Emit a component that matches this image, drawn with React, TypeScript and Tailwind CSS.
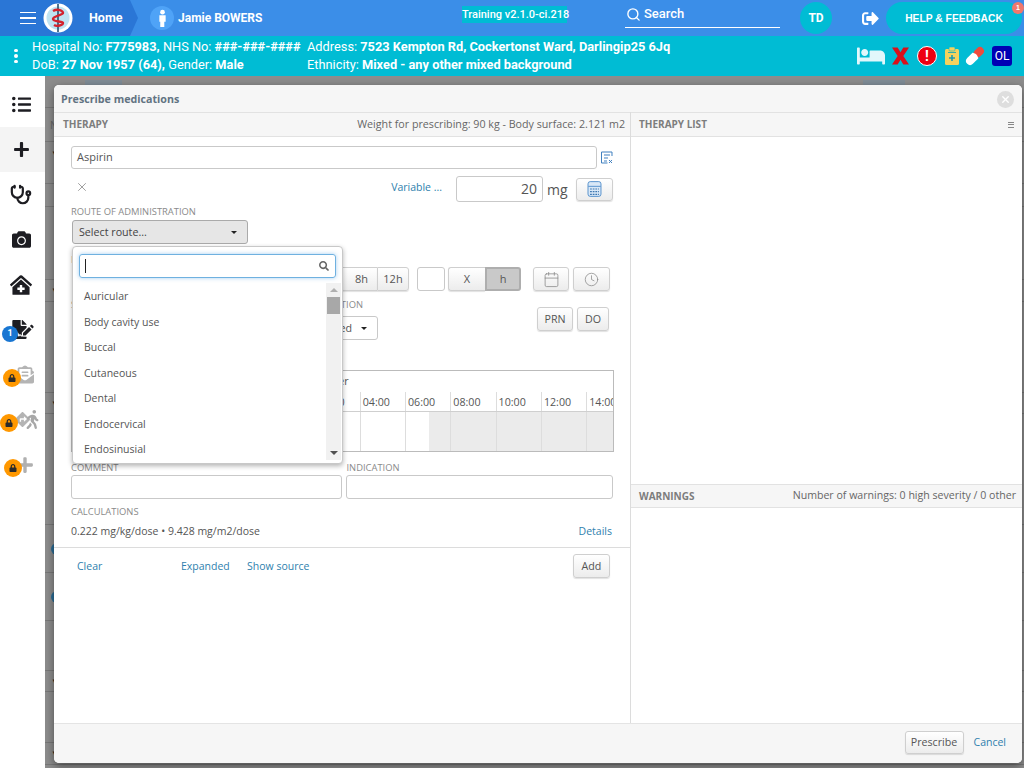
import { Search, X, Calendar, Clock } from "lucide-react";
import {
  FaListUl,
  FaPlus,
  FaCamera,
  FaClinicMedical,
  FaFileSignature,
  FaLock,
  FaWalking,
  FaDirections,
  FaBed,
  FaSignOutAlt,
  FaSearch,
  FaEnvelopeOpenText,
} from "react-icons/fa";
import { LuStethoscope } from "react-icons/lu";

const routes = ["Auricular", "Body cavity use", "Buccal", "Cutaneous", "Dental", "Endocervical", "Endosinusial"];
const hours = ["04:00", "06:00", "08:00", "10:00", "12:00", "14:00"];

const btn =
  "flex items-center justify-center border border-[#cfcfcf] bg-gradient-to-b from-white to-[#ececec] rounded-[3px] text-[#555] shadow-[0_1px_1px_rgba(0,0,0,0.12)]";
const label = "text-[9.4px] leading-[13px] text-[#8a8a8a]";
const link = "text-[#2f7fae] text-[10.5px]";

function Lock({ className }: { className: string }) {
  return (
    <span className={`absolute w-[18px] h-[18px] rounded-full bg-[#ff9800] flex items-center justify-center ${className}`}>
      <FaLock className="w-[8px] h-[8px] text-[#2b2b2b]" />
    </span>
  );
}

function Sidebar() {
  return (
    <div className="w-[45px] bg-white pt-[6px] flex flex-col shrink-0">
      <div className="h-[45px] flex items-center justify-center pr-[3px]">
        <FaListUl className="w-[19px] h-[19px] text-[#1d1d22]" />
      </div>
      <div className="h-[45px] flex items-center justify-center pr-[3px] bg-[#f4f4f4]">
        <FaPlus className="w-[17px] h-[17px] text-[#1d1d22]" />
      </div>
      <div className="h-[45px] flex items-center justify-center pr-[3px]">
        <LuStethoscope className="w-[22px] h-[22px] text-[#1d1d22] stroke-[2.4]" />
      </div>
      <div className="h-[45px] flex items-center justify-center pr-[3px]">
        <FaCamera className="w-[19px] h-[19px] text-[#1d1d22]" />
      </div>
      <div className="h-[45px] flex items-center justify-center pr-[3px]">
        <FaClinicMedical className="w-[22px] h-[20px] text-[#1d1d22]" />
      </div>
      <div className="h-[45px] flex items-center justify-center relative">
        <FaFileSignature className="w-[22px] h-[19px] text-[#1d1d22]" />
        <span className="absolute left-[2px] top-[19px] w-[16px] h-[16px] rounded-full bg-[#1976d2] text-white text-[9px] font-bold flex items-center justify-center font-['Roboto',sans-serif]">
          1
        </span>
      </div>
      <div className="h-[45px] flex items-center justify-center relative pl-[4px]">
        <FaEnvelopeOpenText className="w-[18px] h-[19px] text-[#b4b4b4]" />
        <Lock className="left-[3px] top-[17px]" />
      </div>
      <div className="h-[45px] flex items-center justify-center relative pl-[8px]">
        <FaDirections className="w-[15px] h-[15px] text-[#b4b4b4]" />
        <FaWalking className="ml-[-4px] w-[13px] h-[19px] text-[#a8a8a8]" />
        <Lock className="left-0 top-[17px]" />
      </div>
      <div className="h-[45px] flex items-center justify-center relative pl-[4px]">
        <FaPlus className="w-[18px] h-[18px] text-[#b0b0b0]" />
        <Lock className="left-[4px] top-[17px]" />
      </div>
    </div>
  );
}

function Logo() {
  return (
    <svg viewBox="0 0 30 30" className="w-[30px] h-[30px] shrink-0">
      <circle cx="15" cy="15" r="14.5" fill="#fff" />
      <circle cx="15" cy="15" r="11.5" fill="#bfe3f2" />
      <path d="M15 1v28" stroke="#26506e" strokeWidth="1.6" />
      <path d="M10 8c5-3 10 0 10 2s-10 3-10 6 10 2 10 4-6 4-9 2" fill="none" stroke="#d3232e" strokeWidth="2.4" />
    </svg>
  );
}

function Capsule() {
  return (
    <svg viewBox="0 0 20 20" className="w-[20px] h-[20px]">
      <g transform="rotate(45 10 10)">
        <rect x="6" y="-1" width="8" height="11" rx="4" fill="#ef4b3c" />
        <rect x="6" y="8" width="8" height="13" rx="4" fill="#fff" />
        <rect x="6" y="9" width="8" height="3" fill="#fff" />
      </g>
    </svg>
  );
}

function ClipboardPlus() {
  return (
    <svg viewBox="0 0 14 18" className="w-[14px] h-[18px]">
      <rect x="0" y="2" width="14" height="16" rx="1.5" fill="#f5d25e" />
      <rect x="4" y="0" width="6" height="4" rx="1" fill="#f5d25e" stroke="#00bcd4" strokeWidth="0.6" />
      <path d="M3 5.5h8" stroke="#00a5bb" strokeWidth="0.8" />
      <path d="M7 8v6M4 11h6" stroke="#1f9ab0" strokeWidth="1.6" />
    </svg>
  );
}

function Header() {
  return (
    <div className="h-[36px] bg-[#3b8ee8] flex items-center relative text-white font-['Roboto',sans-serif] shrink-0">
      <div className="w-[138px] h-full bg-[#2a76d6] [clip-path:polygon(0_0,130px_0,138px_18px,130px_100%,0_100%)] flex items-center pl-[20px] shrink-0">
        <div className="flex flex-col gap-[4px] w-[16px]">
          <span className="h-[1.5px] bg-white" />
          <span className="h-[1.5px] bg-white" />
          <span className="h-[1.5px] bg-white" />
        </div>
        <div className="ml-[7px]">
          <Logo />
        </div>
        <span className="ml-[16px] text-[12.5px] font-bold">Home</span>
      </div>
      <div className="ml-[12px] w-[24px] h-[24px] rounded-full bg-[#4fa3f7] flex items-center justify-center shrink-0">
        <svg viewBox="0 0 10 20" className="w-[9px] h-[19px]" fill="#fff">
          <circle cx="5" cy="3" r="2.6" />
          <path d="M1.5 6.5h7v7h-1.5v6h-4.5v-6h-1z" />
        </svg>
      </div>
      <span className="ml-[4px] w-[84px] text-[12px] font-bold whitespace-nowrap shrink-0">Jamie BOWERS</span>
      <div className="ml-[200px] mb-[8px] w-[105px] h-[17px] bg-[#00bcd4] text-[11px] leading-[17px] font-medium text-center whitespace-nowrap shrink-0">
        Training v2.1.0-ci.218
      </div>
      <div className="ml-[58px] mb-[6px] w-[155px] h-[25px] border-b border-white flex items-center pb-[1px] shrink-0">
        <Search className="w-[15px] h-[15px] ml-[1px]" strokeWidth={2.2} />
        <span className="ml-[3px] text-[13px] font-medium">Search</span>
      </div>
      <div className="ml-[20px] w-[32px] h-[32px] rounded-full bg-[#00bcd4] flex items-center justify-center text-[12px] font-bold shrink-0">TD</div>
      <FaSignOutAlt className="ml-[29px] w-[19px] h-[17px] shrink-0" />
      <div className="ml-[6px] w-[136px] h-[32px] pt-px rounded-full bg-[#00bcd4] flex items-center justify-center font-['Liberation_Sans',sans-serif] text-[10.3px] font-bold relative shrink-0">
        HELP &amp; FEEDBACK
        <span className="absolute right-[-2px] top-0 w-[12px] h-[12px] rounded-full bg-[#f0776c] text-[7px] flex items-center justify-center">1</span>
      </div>
    </div>
  );
}

function PatientBar() {
  return (
    <div className="h-[40px] bg-[#00bcd4] flex items-center text-white text-[12.8px] leading-[18px] font-['Roboto',sans-serif] shrink-0">
      <div className="w-[32px] flex flex-col items-center gap-[2px]">
        <span className="w-[3.5px] h-[3.5px] rounded-full bg-white" />
        <span className="w-[3.5px] h-[3.5px] rounded-full bg-white" />
        <span className="w-[3.5px] h-[3.5px] rounded-full bg-white" />
      </div>
      <div className="w-[275px] whitespace-nowrap">
        <div>
          Hospital No: <b className="font-bold">F775983,</b> NHS No: <b className="font-bold">###-###-####</b>
        </div>
        <div>
          DoB: <b className="font-bold">27 Nov 1957 (64),</b> Gender: <b className="font-bold">Male</b>
        </div>
      </div>
      <div className="whitespace-nowrap">
        <div>
          Address: <b className="font-bold">7523 Kempton Rd, Cockertonst Ward, Darlingip25 6Jq</b>
        </div>
        <div>
          Ethnicity: <b className="font-bold">Mixed - any other mixed background</b>
        </div>
      </div>
      <div className="ml-auto mr-[12px] flex items-center">
        <FaBed className="w-[28px] h-[24px] text-[#e2f7fb]" />
        <svg viewBox="0 0 18 18" className="ml-[7px] w-[17px] h-[18px]" fill="#d8101a">
          <path d="M0 0h6l3 5 3-5h6l-6 9 6 9h-6l-3-5-3 5H0l6-9z" />
        </svg>
        <span className="ml-[8px] w-[20px] h-[20px] rounded-full bg-[#ee0011] border border-white flex items-center justify-center text-[14px] font-bold">!</span>
        <span className="ml-[8px] flex">
          <ClipboardPlus />
        </span>
        <span className="ml-[6px] flex">
          <Capsule />
        </span>
        <span className="ml-[7px] w-[20px] h-[20px] rounded-[3px] bg-[#0000b4] text-[12px] flex items-center justify-center">OL</span>
      </div>
    </div>
  );
}

function Backdrop() {
  return (
    <div className="flex-1 bg-[#8c8c8c] flex flex-col relative overflow-hidden">
      <div className="h-[32px] border-b border-[#777] flex items-start pt-[4px] shrink-0">
        <span className="ml-[40px] w-[37px] h-[9px] bg-[#7f8c96]" />
        <span className="ml-auto mr-[119px] w-[42px] h-[9px] bg-[#7f8c96]" />
      </div>
      <div className="h-[34px] border-b border-[#777] pl-[5px] text-[10px] leading-[34px] text-[#666] shrink-0">N</div>
      <div className="h-[42px] border-b border-[#777] pl-[6px] text-[8px] leading-[22px] text-[#222] shrink-0">▼</div>
      <div className="h-[23px] border-b border-[#777] shrink-0" />
      <div className="h-[73px] border-b border-[#777] shrink-0" />
      <div className="h-[22px] border-b border-[#777] pl-[6px] text-[8px] leading-[20px] text-[#222] shrink-0">▼</div>
      <div className="h-[91px] border-b border-[#777] shrink-0" />
      <div className="h-[21px] border-b border-[#777] pl-[6px] text-[8px] leading-[20px] text-[#222] shrink-0">▼</div>
      <div className="h-[111px] border-b border-[#777] shrink-0" />
      <div className="h-[48px] border-b border-[#777] flex items-center shrink-0">
        <span className="ml-[6px] w-[8px] h-[12px] rounded-l-full bg-[#2b6c96]" />
      </div>
      <div className="h-[48px] border-b border-[#777] flex items-center shrink-0">
        <span className="ml-[6px] w-[8px] h-[12px] rounded-l-full bg-[#2b6c96]" />
      </div>
      <div className="h-[50px] border-b border-[#777] shrink-0" />
      <div className="h-[21px] border-b border-[#777] pl-[6px] text-[8px] leading-[20px] text-[#222] shrink-0">▼</div>
      <div className="h-[51px] border-b border-[#777] shrink-0" />
      <div className="h-[22px] border-b border-[#777] pl-[6px] text-[8px] leading-[20px] text-[#222] shrink-0">▼</div>
    </div>
  );
}

function RouteDropdown() {
  return (
    <div className="absolute left-[18px] top-[134px] w-[271px] h-[218px] bg-white border border-[#c8c8c8] rounded-[4px] shadow-[0_2px_5px_rgba(0,0,0,0.3)] z-10 flex flex-col">
      <div className="mx-[6px] mt-[7px] h-[24px] border border-[#6fb1e0] rounded-[3px] shadow-[0_0_4px_rgba(80,160,230,0.5)] flex items-center shrink-0">
        <span className="ml-[5px] w-px h-[14px] bg-[#222]" />
        <FaSearch className="ml-auto mr-[6px] w-[10px] h-[10px] text-[#666]" />
      </div>
      <div className="flex flex-1 mt-[5px] mb-[3px] min-h-0">
        <div className="flex-1 flex flex-col pt-px text-[10.5px] text-[#555]">
          {routes.map((r) => (
            <div key={r} className="h-[25.5px] leading-[25px] pl-[11px] shrink-0">
              {r}
            </div>
          ))}
        </div>
        <div className="w-[15px] mr-px bg-[#f1f1f1] flex flex-col items-center pt-[5px] pb-[5px]">
          <span className="w-0 h-0 border-x-[4px] border-x-transparent border-b-[4px] border-b-[#b0b0b0]" />
          <span className="mt-[5px] w-[13px] h-[17px] bg-[#a8a8a8]" />
          <span className="mt-auto w-0 h-0 border-x-[4px] border-x-transparent border-t-[4px] border-t-[#505050]" />
        </div>
      </div>
    </div>
  );
}

function TherapyForm() {
  return (
    <div className="w-[577px] border-r border-[#dcdcdc] flex flex-col relative shrink-0 text-[#555]">
      <div className="h-[25px] bg-[#f6f6f6] border-y border-[#e2e2e2] flex items-center justify-between pl-[9px] pr-[5px] shrink-0">
        <span className="text-[10px] font-bold text-[#7d7d7d]">THERAPY</span>
        <span className="text-[10.7px] text-[#666]">Weight for prescribing: 90 kg - Body surface: 2.121 m2</span>
      </div>
      <div className="pl-[17px] pr-[17px] flex flex-col">
        <div className="mt-[9px] flex items-center">
          <div className="w-[527px] h-[23px] border border-[#c9c9c9] rounded-[3px] pl-[5px] text-[11px] leading-[20px]">Aspirin</div>
          <svg viewBox="0 0 12 13" className="ml-[4px] w-[12px] h-[13px]" fill="none" stroke="#3f7fc0">
            <path d="M.5 1h10.5v4M.5 1v11h6M3 4h6M3 7h4M3 10h3M8 9l3 3M11 9l-3 3" />
          </svg>
        </div>
        <div className="mt-[7px] h-[26px] flex items-center">
          <X className="ml-[4px] mb-[4px] w-[14px] h-[14px] text-[#777]" strokeWidth={1.2} />
          <span className={`${link} ml-auto mb-[3px]`}>Variable ...</span>
          <div className="ml-[14px] w-[87px] h-[26px] border border-[#c9c9c9] rounded-[3px] text-right pr-[5px] text-[14px] leading-[24px]">20</div>
          <span className="ml-[4px] w-[29px] text-[14px]">mg</span>
          <div className={`${btn} w-[37px] h-[23px]`}>
            <svg viewBox="0 0 16 18" className="w-[15px] h-[16px]">
              <rect x=".7" y=".7" width="14.6" height="16.6" rx="2.5" fill="#d9e8f7" stroke="#4a8ac9" />
              <path d="M1 6h14" stroke="#4a8ac9" />
              <path d="M3 9h10M3 12h10M3 15h10" stroke="#3c76b0" strokeWidth="1.4" strokeDasharray="2 1" />
            </svg>
          </div>
        </div>
        <div className={`${label} mt-[3px]`}>ROUTE OF ADMINISTRATION</div>
        <div className="mt-[2px] ml-px w-[176px] h-[24px] bg-[#e6e6e6] border border-[#aaa] rounded-[3px] flex items-center justify-between px-[6px] text-[10.7px] text-[#444]">
          <span>Select route...</span>
          <span className="mr-[4px] w-0 h-0 border-x-[3.5px] border-x-transparent border-t-[3.5px] border-t-[#222]" />
        </div>
        <div className={`${label} mt-[9px] h-[14px]`}>DOSE</div>
        <div className="h-[24px] flex items-center text-[11px] pl-[269px]">
          <div className={`${btn} w-[37px] h-[24px] pl-[5px] rounded-r-none border-r-0`}>8h</div>
          <div className={`${btn} w-[32px] h-[24px] rounded-l-none`}>12h</div>
          <div className="ml-[8px] w-[28px] h-[24px] border border-[#c9c9c9] rounded-[3px]" />
          <div className={`${btn} ml-[3px] w-[37px] h-[24px] rounded-r-none border-r-0`}>X</div>
          <div className="w-[36px] h-[24px] bg-[#c9c9c9] border-2 border-[#aeaeae] rounded-r-[3px] flex items-center justify-center">h</div>
          <div className={`${btn} ml-[12px] w-[36px] h-[24px]`}>
            <Calendar className="w-[17px] h-[17px] text-[#888]" strokeWidth={1.1} />
          </div>
          <div className={`${btn} ml-[4px] w-[37px] h-[24px]`}>
            <Clock className="w-[15px] h-[15px] text-[#888]" strokeWidth={1.2} />
          </div>
        </div>
        <div className="mt-[7px] h-[42px] flex text-[10.7px]">
          <div className="w-[239px]">
            <div className={label}>START</div>
          </div>
          <div className="w-[68px] flex flex-col items-end">
            <div className={`${label} mr-[15px]`}>DURATION</div>
            <div className="mt-[5px] w-[66px] h-[24px] border border-[#c9c9c9] rounded-[3px] flex items-center justify-end pr-[10px] gap-[9px]">
              <span>Unlimited</span>
              <span className="w-0 h-0 border-x-[3.5px] border-x-transparent border-t-[3.5px] border-t-[#222]" />
            </div>
          </div>
          <div className="ml-auto mt-[9px] flex gap-[4px] mr-[4px]">
            <div className={`${btn} w-[36px] h-[24px]`}>PRN</div>
            <div className={`${btn} w-[32px] h-[24px]`}>DO</div>
          </div>
        </div>
        <div className="mt-[30px] w-[543px] h-[82px] border border-[#bbb] overflow-hidden flex flex-col text-[10.7px]">
          <div className="h-[21px] pl-[224px] leading-[20px] shrink-0">November</div>
          <div className="h-[20px] flex border-b border-[#cfcfcf] shrink-0">
            <div className="w-[242.4px] shrink-0" />
            <div className="w-[45.3px] border-l border-[#ddd] pl-[2px] leading-[21px] shrink-0">02:00</div>
            {hours.map((h) => (
              <div key={h} className="w-[45.3px] border-l border-[#ddd] pl-[2px] leading-[21px] shrink-0">
                {h}
              </div>
            ))}
          </div>
          <div className="flex flex-1">
            <div className="w-[242.4px] shrink-0" />
            <div className="w-[45.3px] border-l border-[#ddd] shrink-0" />
            <div className="w-[45.3px] border-l border-[#ddd] shrink-0" />
            <div className="w-[45.3px] border-l border-[#ddd] pl-[23px] shrink-0">
              <div className="h-full bg-[#ebebeb]" />
            </div>
            <div className="w-[45.3px] border-l border-[#ddd] bg-[#ebebeb] shrink-0" />
            <div className="w-[45.3px] border-l border-[#ddd] bg-[#ebebeb] shrink-0" />
            <div className="w-[45.3px] border-l border-[#ddd] bg-[#ebebeb] shrink-0" />
            <div className="flex-1 border-l border-[#ddd] bg-[#ebebeb]" />
          </div>
        </div>
        <div className="mt-[9px] flex gap-[4px]">
          <div className="w-[271px]">
            <div className={label}>COMMENT</div>
            <div className="mt-px h-[24px] border border-[#c9c9c9] rounded-[3px]" />
          </div>
          <div className="w-[268px]">
            <div className={`${label} pl-px`}>INDICATION</div>
            <div className="mt-px h-[24px] border border-[#c9c9c9] rounded-[3px]" />
          </div>
        </div>
        <div className={`${label} mt-[6px]`}>CALCULATIONS</div>
        <div className="mt-[6px] flex justify-between text-[10.5px] leading-[14px]">
          <span>0.222 mg/kg/dose • 9.428 mg/m2/dose</span>
          <span className="text-[#2f7fae] mr-[1px]">Details</span>
        </div>
      </div>
      <div className="mt-[9px] border-t border-[#dcdcdc] flex items-start pt-[6px] pl-[23px] pr-[20px] text-[10.7px]">
        <span className={`${link} w-[104px] mt-[5px]`}>Clear</span>
        <span className={`${link} w-[66px] mt-[5px]`}>Expanded</span>
        <span className={`${link} mt-[5px]`}>Show source</span>
        <div className={`${btn} ml-auto w-[37px] h-[24px]`}>Add</div>
      </div>
      <RouteDropdown />
    </div>
  );
}

function TherapyList() {
  return (
    <div className="flex-1 flex flex-col text-[#666]">
      <div className="h-[25px] bg-[#f6f6f6] border-y border-[#e2e2e2] flex items-center justify-between pl-[8px] pr-[8px] shrink-0">
        <span className="text-[10px] font-bold text-[#7d7d7d]">THERAPY LIST</span>
        <div className="flex flex-col gap-[1.5px] w-[6px]">
          <span className="h-px bg-[#888]" />
          <span className="h-px bg-[#888]" />
          <span className="h-px bg-[#888]" />
        </div>
      </div>
      <div className="h-[347px] shrink-0" />
      <div className="h-[24px] bg-[#f6f6f6] border-y border-[#e2e2e2] flex items-center justify-between pl-[8px] pr-[6px] shrink-0">
        <span className="text-[10px] font-bold text-[#7d7d7d]">WARNINGS</span>
        <span className="text-[10.6px]">Number of warnings: 0 high severity / 0 other</span>
      </div>
    </div>
  );
}

function PrescribeModal() {
  return (
    <div className="absolute left-[54px] top-[85px] w-[968px] h-[678px] bg-white rounded-[5px] shadow-[0_3px_8px_rgba(0,0,0,0.45)] flex flex-col overflow-hidden font-['Open_Sans',sans-serif]">
      <div className="h-[27px] bg-[#f6f6f6] flex items-center justify-between pl-[7px] pr-[8px] pt-px shrink-0">
        <span className="text-[10.7px] font-bold text-[#627382]">Prescribe medications</span>
        <span className="w-[17px] h-[17px] rounded-full bg-[#dedede] flex items-center justify-center">
          <X className="w-[11px] h-[11px] text-white" strokeWidth={3} />
        </span>
      </div>
      <div className="flex flex-1 min-h-0">
        <TherapyForm />
        <TherapyList />
      </div>
      <div className="h-[40px] bg-[#f6f6f6] border-t border-[#e4e4e4] flex items-center justify-end pr-[16px] shrink-0">
        <div className={`${btn} w-[59px] h-[23px] text-[10.7px] mb-[2px]`}>Prescribe</div>
        <span className={`${link} ml-[10px] mb-[2px]`}>Cancel</span>
      </div>
    </div>
  );
}

export default function App() {
  return (
    <div className="w-[1024px] h-[768px] flex flex-col relative overflow-hidden">
      <Header />
      <PatientBar />
      <div className="flex flex-1 min-h-0">
        <Sidebar />
        <Backdrop />
      </div>
      <PrescribeModal />
    </div>
  );
}
